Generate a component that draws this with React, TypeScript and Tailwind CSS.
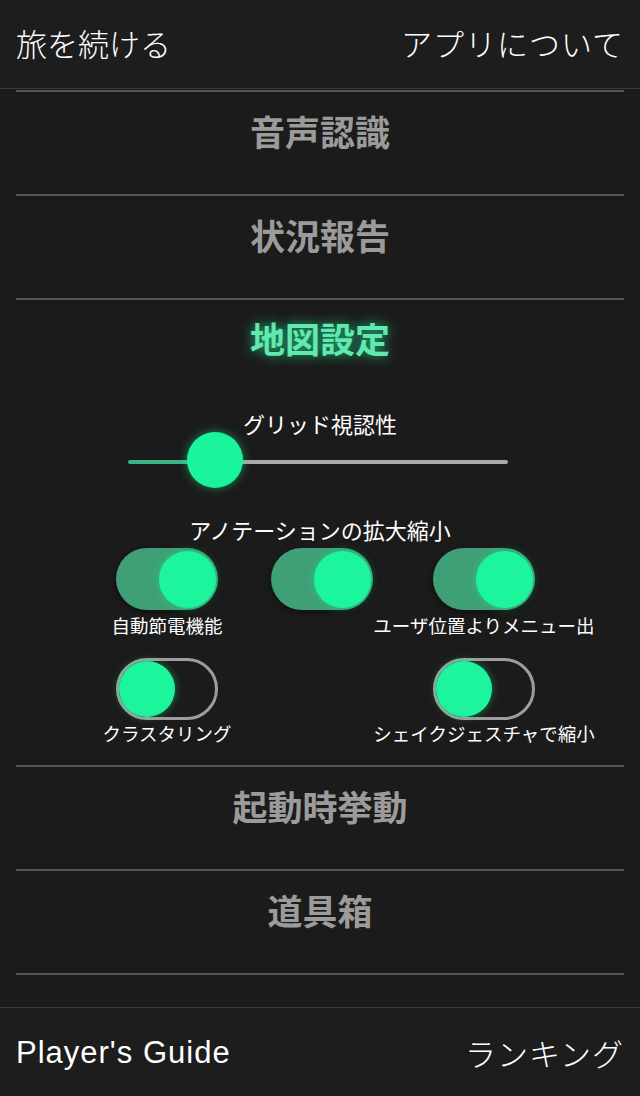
import React from "react";

const font = { fontFamily: '"Noto Sans CJK JP", "Noto Sans", sans-serif' };

const MenuRow = ({ label }: { label: string }) => (
  <div className="flex h-[104px] items-center justify-center border-t-2 border-[#555555] pb-[26px]">
    <span className="text-[35px] font-bold leading-none text-[#9b9b9b]">{label}</span>
  </div>
);

const Toggle = ({ on }: { on: boolean }) =>
  on ? (
    <div className="flex h-[62px] w-[102px] shrink-0 items-center justify-end rounded-full bg-[#3f9f76] pr-[2px] shadow-[0_2px_6px_rgba(0,0,0,0.5)]">
      <div className="h-[57px] w-[57px] rounded-full bg-[#1cf59c] shadow-[0_0_8px_rgba(28,245,156,0.45)]" />
    </div>
  ) : (
    <div className="flex h-[62px] w-[102px] shrink-0 items-center justify-start rounded-full border-[3px] border-[#9d9d9d]">
      <div className="h-[56px] w-[56px] rounded-full bg-[#1cf59c] shadow-[0_0_8px_rgba(28,245,156,0.45)]" />
    </div>
  );

const Label = ({ text }: { text: string }) => (
  <span className="whitespace-nowrap text-[18.5px] leading-[20px] text-white">{text}</span>
);

export default function App() {
  const value = 0.23;
  return (
    <div className="flex h-[1096px] w-full flex-col overflow-hidden bg-[#1b1b1b]" style={font}>
      {/* Top bar */}
      <header className="flex h-[89px] shrink-0 items-center justify-between border-b border-[#3a3a3a] bg-[#1d1d1d] px-4 pb-[4px] text-[31px] leading-none text-white">
        <span className="font-light">旅を続ける</span>
        <span className="font-light tracking-[1px]">アプリについて</span>
      </header>

      {/* Menu */}
      <main className="flex-1 px-4 pt-[1px]">
        <MenuRow label="音声認識" />
        <MenuRow label="状況報告" />

        <section className="border-t-2 border-[#555555] pb-[22px]">
          <div className="flex h-[82px] items-center justify-center pb-[8px]">
            <span className="text-[35px] font-bold leading-none text-[#62e8b0] [text-shadow:0_0_12px_rgba(30,245,155,0.75)]">
              地図設定
            </span>
          </div>

          <p className="mt-[30px] text-center text-[22px] leading-[22px] text-white">グリッド視認性</p>

          {/* Slider */}
          <div className="relative ml-[112px] mt-[2px] h-[52px] w-[380px]">
            <div className="absolute left-0 right-0 top-[24px] flex h-[4px] overflow-hidden rounded-full">
              <div className="bg-[#3cb585]" style={{ width: `${value * 100}%` }} />
              <div className="flex-1 bg-[#a9a9a9]" />
            </div>
            <div
              className="absolute top-[-4px] h-[56px] w-[56px] -translate-x-1/2 rounded-full bg-[#1af59b] shadow-[0_0_10px_rgba(26,245,155,0.5)]"
              style={{ left: `${value * 100}%` }}
            />
          </div>

          <p className="mt-[30px] text-center text-[22px] leading-[22px] text-white">アノテーションの拡大縮小</p>

          <div className="ml-[35px] mt-[8px] grid grid-cols-[232px_78px_246px]">
            <div className="flex justify-center"><Toggle on /></div>
            <div className="flex justify-center"><Toggle on /></div>
            <div className="flex justify-center"><Toggle on /></div>
            <div className="mt-[5px] flex justify-center"><Label text="自動節電機能" /></div>
            <div />
            <div className="mt-[5px] flex justify-center"><Label text="ユーザ位置よりメニュー出" /></div>

            <div className="mt-[23px] flex justify-center"><Toggle on={false} /></div>
            <div />
            <div className="mt-[23px] flex justify-center"><Toggle on={false} /></div>
            <div className="mt-[3px] flex justify-center"><Label text="クラスタリング" /></div>
            <div />
            <div className="mt-[3px] flex justify-center"><Label text="シェイクジェスチャで縮小" /></div>
          </div>
        </section>

        <MenuRow label="起動時挙動" />
        <MenuRow label="道具箱" />
        <div className="border-t-2 border-[#555555]" />
      </main>

      {/* Bottom bar */}
      <footer className="flex h-[89px] shrink-0 items-center justify-between border-t border-[#3a3a3a] bg-[#1d1d1d] px-4 text-[31px] leading-none text-white">
        <span className="tracking-[1px]" style={{ fontFamily: '"Liberation Sans", Arial, sans-serif' }}>
          Player's Guide
        </span>
        <span className="font-light tracking-[1px]">ランキング</span>
      </footer>
    </div>
  );
}
